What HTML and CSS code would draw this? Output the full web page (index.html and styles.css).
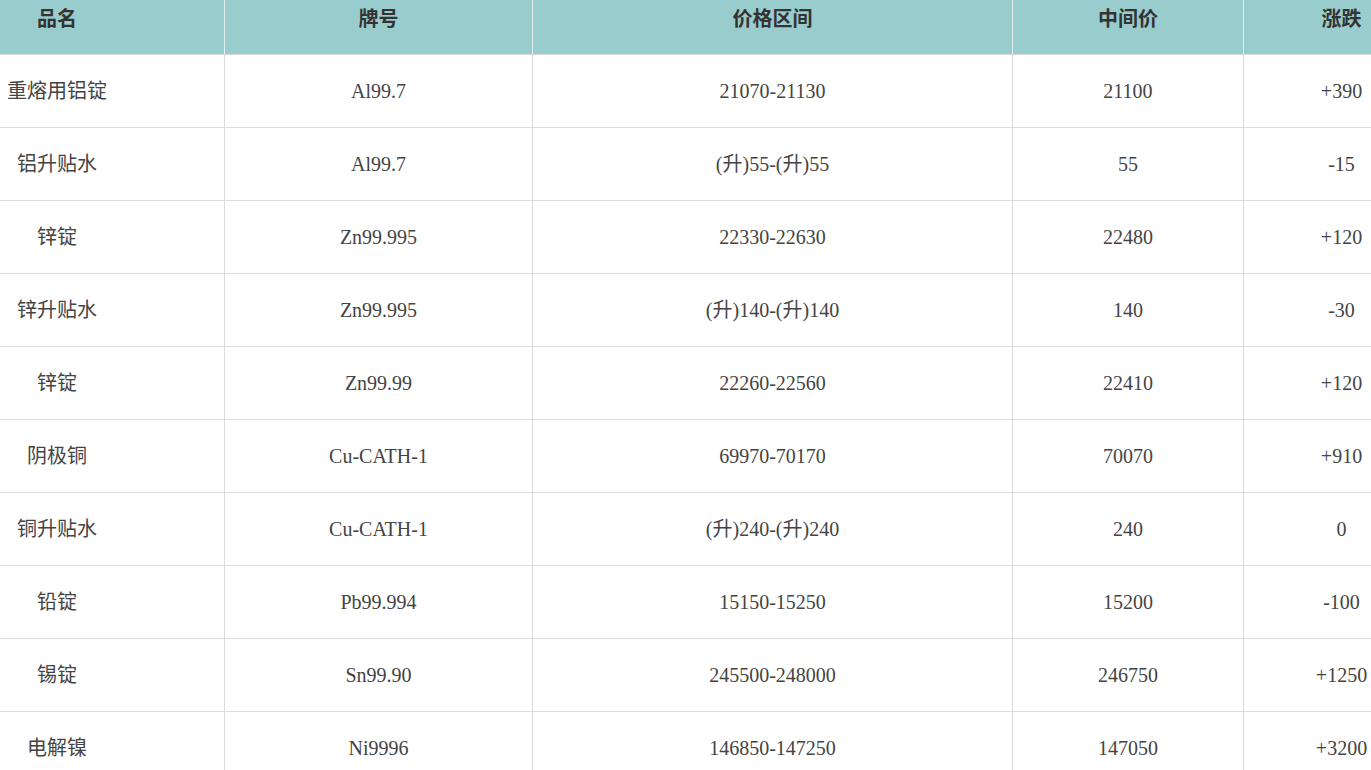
FILE: index.html
```html
<!DOCTYPE html>
<html lang="zh-CN">
<head>
<meta charset="utf-8">
<title>价格表</title>
<link rel="stylesheet" href="styles.css">
</head>
<body>
<div class="viewport">
<table class="price-table">
<colgroup>
<col class="c-name"><col class="c-brand"><col class="c-range"><col class="c-mid"><col class="c-chg">
</colgroup>
<thead>
<tr><th>品名</th><th>牌号</th><th>价格区间</th><th>中间价</th><th>涨跌</th></tr>
</thead>
<tbody>
<tr><td>重熔用铝锭</td><td>Al99.7</td><td>21070-21130</td><td>21100</td><td>+390</td></tr>
<tr><td>铝升贴水</td><td>Al99.7</td><td>(升)55-(升)55</td><td>55</td><td>-15</td></tr>
<tr><td>锌锭</td><td>Zn99.995</td><td>22330-22630</td><td>22480</td><td>+120</td></tr>
<tr><td>锌升贴水</td><td>Zn99.995</td><td>(升)140-(升)140</td><td>140</td><td>-30</td></tr>
<tr><td>锌锭</td><td>Zn99.99</td><td>22260-22560</td><td>22410</td><td>+120</td></tr>
<tr><td>阴极铜</td><td>Cu-CATH-1</td><td>69970-70170</td><td>70070</td><td>+910</td></tr>
<tr><td>铜升贴水</td><td>Cu-CATH-1</td><td>(升)240-(升)240</td><td>240</td><td>0</td></tr>
<tr><td>铅锭</td><td>Pb99.994</td><td>15150-15250</td><td>15200</td><td>-100</td></tr>
<tr><td>锡锭</td><td>Sn99.90</td><td>245500-248000</td><td>246750</td><td>+1250</td></tr>
<tr><td>电解镍</td><td>Ni9996</td><td>146850-147250</td><td>147050</td><td>+3200</td></tr>
</tbody>
</table>
</div>
</body>
</html>
```
FILE: styles.css
```css
html, body {
  margin: 0;
  padding: 0;
  background: #fff;
}
.viewport {
  width: 1371px;
  height: 770px;
  overflow: hidden;
}
.price-table {
  table-layout: fixed;
  border-collapse: separate;
  border-spacing: 0;
  width: 1550px;
  margin: -18px 0 0 -110px;
  font-family: "Liberation Serif", "Noto Sans CJK SC", serif;
  font-size: 20px;
  color: #444;
}
.c-name { width: 335px; }
.c-brand { width: 308px; }
.c-range { width: 480px; }
.c-mid { width: 231px; }
.c-chg { width: 196px; }
.price-table th,
.price-table td {
  height: 72px;
  padding: 0;
  text-align: center;
  vertical-align: middle;
  border-right: 1px solid #dcdcdc;
  border-bottom: 1px solid #dcdcdc;
  box-sizing: content-box;
  line-height: 24px;
  white-space: nowrap;
}
.price-table th {
  background: #99cccc;
  color: #333;
  font-weight: bold;
  font-family: "Noto Sans CJK SC", sans-serif;
  border-right-color: #e2eeee;
}
```
